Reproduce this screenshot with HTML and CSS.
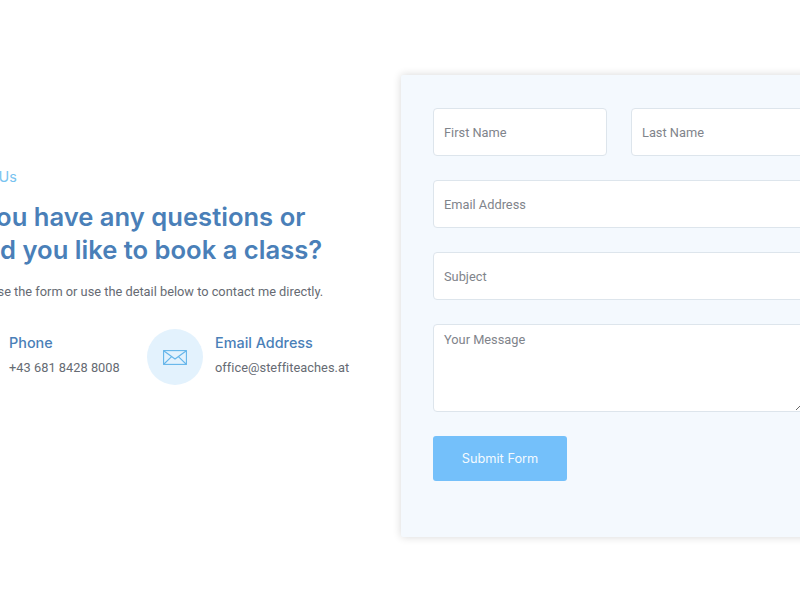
FILE: index.html
```html
<!DOCTYPE html>
<html lang="en">
<head>
<meta charset="utf-8">
<title>Contact Us</title>
<link rel="stylesheet" href="styles.css">
</head>
<body>
<main class="page">
  <section class="info">
    <p class="eyebrow">Contact Us</p>
    <h1 class="title">Do you have any questions or would you like to book a class?</h1>
    <p class="lead">Please use the form or use the detail below to contact me directly.</p>
    <div class="contacts">
      <div class="contact contact-phone">
        <span class="bubble">
          <svg class="icon" viewBox="0 0 24 15" aria-hidden="true"><path d="M7 1c1 4 3 7 9 9"/></svg>
        </span>
        <div>
          <h2 class="contact-title">Phone</h2>
          <p class="contact-text">+43 681 8428 8008</p>
        </div>
      </div>
      <div class="contact">
        <span class="bubble">
          <svg class="icon" viewBox="0 0 24 15" aria-hidden="true">
            <rect x=".6" y=".6" width="22.8" height="13.8"/>
            <path d="M1 1 12 9 23 1M1 14 8.6 6.6M23 14 15.4 6.6"/>
          </svg>
        </span>
        <div>
          <h2 class="contact-title">Email Address</h2>
          <p class="contact-text">office@steffiteaches.at</p>
        </div>
      </div>
    </div>
  </section>
  <form class="card">
    <div class="row">
      <input class="field" type="text" placeholder="First Name">
      <input class="field" type="text" placeholder="Last Name">
    </div>
    <input class="field" type="email" placeholder="Email Address">
    <input class="field" type="text" placeholder="Subject">
    <textarea class="field message" placeholder="Your Message"></textarea>
    <button class="submit" type="button">Submit Form</button>
  </form>
</main>
</body>
</html>
```
FILE: styles.css
```css
html, body {
  margin: 0;
  height: 100%;
  overflow: hidden;
  background: #fff;
}
.page {
  display: flex;
  align-items: flex-start;
  width: 900px;
  margin-left: -59px;
  padding-top: 75px;
  gap: 40px;
}
.info {
  width: 420px;
  flex: none;
  padding-top: 92px;
}
.eyebrow {
  margin: 0 0 13px;
  font: 400 14.4px/20px Inter, sans-serif;
  color: #78c3f0;
}
.title {
  margin: 0 0 16px;
  font: 600 25.6px/33px Inter, sans-serif;
  color: #4a7fb8;
}
.lead {
  margin: 0 0 27px 8px;
  font: 400 12.8px/20px Roboto, sans-serif;
  color: #666b73;
}
.contacts {
  display: flex;
  gap: 28px;
}
.contact {
  display: flex;
  align-items: center;
  gap: 12px;
}
.contact-phone {
  width: 178px;
}
.bubble {
  flex: none;
  width: 56px;
  height: 56px;
  border-radius: 50%;
  background: #e3f2fd;
  display: flex;
  align-items: center;
  justify-content: center;
}
.icon {
  width: 24px;
  height: 15px;
  fill: none;
  stroke: #64b5ea;
  stroke-width: 1.1;
}
.contact-title {
  margin: 0 0 5px;
  font: 500 14.4px/20px Inter, sans-serif;
  color: #4a7fb8;
}
.contact-text {
  margin: 0 0 3px;
  font: 400 12.8px/20px Roboto, sans-serif;
  letter-spacing: .03px;
  color: #666b73;
  white-space: nowrap;
}
.card {
  flex: none;
  width: 436px;
  box-sizing: border-box;
  height: 462px;
  padding: 33px 32px;
  background: #f4f9fe;
  border-radius: 2px;
  box-shadow: 0 0 8px rgba(0, 0, 0, .16);
  display: flex;
  flex-direction: column;
  gap: 24px;
}
.row {
  display: flex;
  gap: 24px;
}
.field {
  display: block;
  width: 100%;
  min-width: 0;
  box-sizing: border-box;
  height: 48px;
  margin: 0;
  padding: 0 10px;
  background: #fff;
  border: 1px solid #dde5ec;
  border-radius: 4px;
  font: 400 12.8px/20px Roboto, sans-serif;
  color: #666b73;
  outline: none;
}
.field::placeholder {
  color: #7f848b;
  opacity: 1;
}
.message {
  height: 88px;
  padding: 5px 10px;
}
.submit {
  align-self: flex-start;
  width: 134px;
  height: 45px;
  border: 0;
  border-radius: 3px;
  background: #74c0fa;
  color: #f3faff;
  font: 400 12.8px/20px Inter, sans-serif;
}
```
